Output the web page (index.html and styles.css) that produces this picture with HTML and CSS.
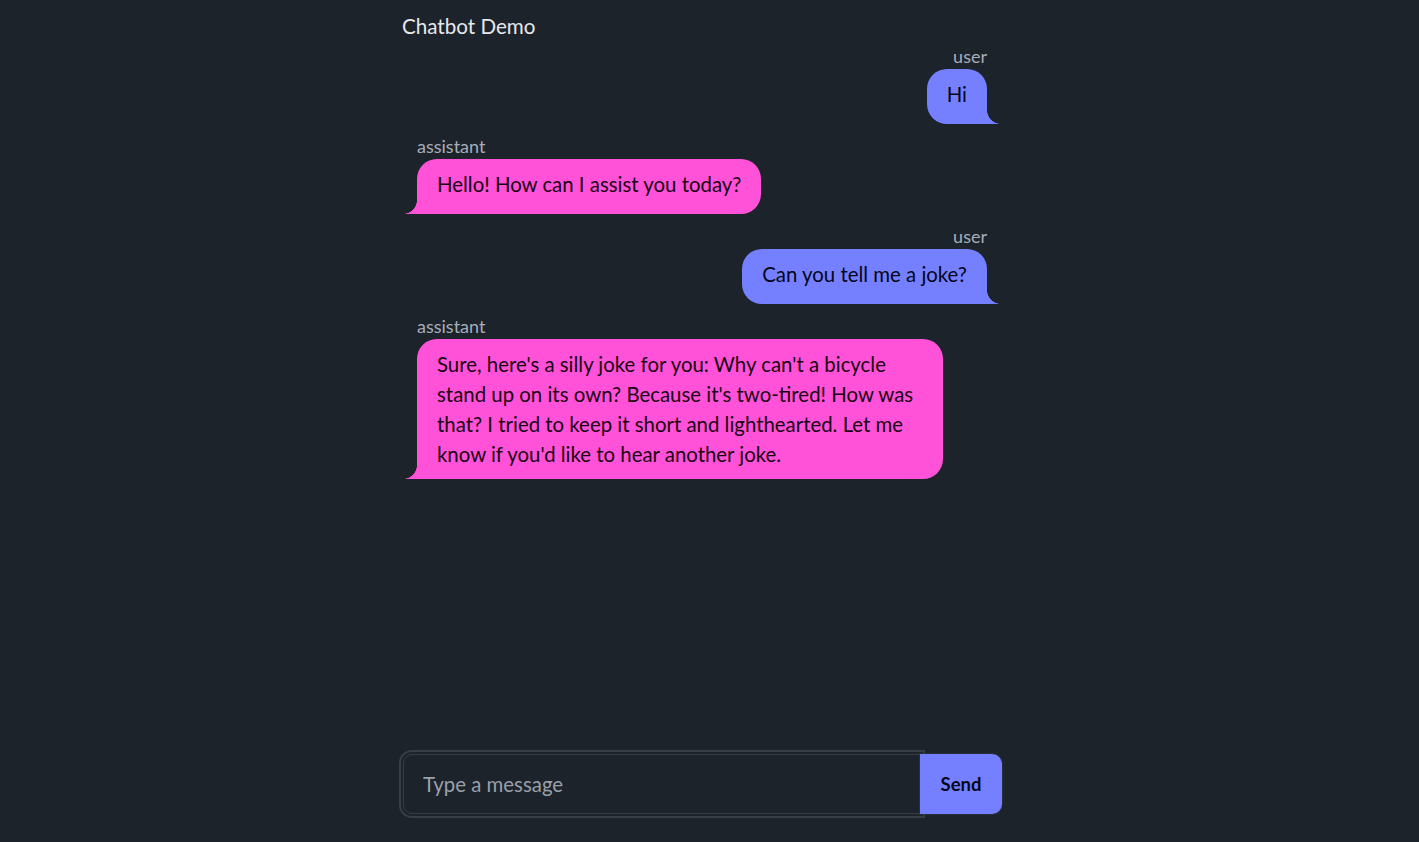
FILE: index.html
```html
<!DOCTYPE html>
<html lang="en">
<head>
<meta charset="utf-8">
<title>Chatbot Demo</title>
<link rel="stylesheet" href="styles.css">
</head>
<body>
<div class="app">
  <h1 class="title">Chatbot Demo</h1>
  <div class="chat-list">
    <div class="chat chat-end">
      <div class="chat-header">user</div>
      <div class="bubble bubble-user">Hi</div>
    </div>
    <div class="chat chat-start">
      <div class="chat-header">assistant</div>
      <div class="bubble bubble-assistant">Hello! How can I assist you today?</div>
    </div>
    <div class="chat chat-end">
      <div class="chat-header">user</div>
      <div class="bubble bubble-user">Can you tell me a joke?</div>
    </div>
    <div class="chat chat-start">
      <div class="chat-header">assistant</div>
      <div class="bubble bubble-assistant">Sure, here's a silly joke for you: Why can't a bicycle stand up on its own? Because it's two-tired! How was that? I tried to keep it short and lighthearted. Let me know if you'd like to hear another joke.</div>
    </div>
  </div>
  <form class="composer" onsubmit="return false">
    <input class="composer-input" type="text" placeholder="Type a message">
    <button class="composer-send" type="submit">Send</button>
  </form>
</div>
</body>
</html>
```
FILE: styles.css
```css
* { box-sizing: border-box; }
html, body { height: 100%; }
body {
  margin: 0;
  padding-right: 17px;
  background: #1d232a;
  color: #a6adbb;
  font-family: Lato, "Noto Sans", sans-serif;
  display: flex;
  justify-content: center;
}
.app {
  width: 604px;
  height: 100vh;
  display: flex;
  flex-direction: column;
}
.title {
  margin: 0;
  padding: 13px 0 0 3px;
  height: 39px;
  font-size: 20.6px;
  line-height: 27px;
  font-weight: 400;
  color: #e6e8ec;
}
.chat-list {
  flex: 1;
  display: flex;
  flex-direction: column;
  padding: 0 2px 0 4px;
}
.chat {
  display: flex;
  flex-direction: column;
  padding: 5px 0;
}
.chat-start { align-items: flex-start; padding-left: 14px; }
.chat-end { align-items: flex-end; padding-right: 14px; }
.chat-header {
  font-size: 18px;
  line-height: 25px;
  color: #a6adbb;
}
.bubble {
  position: relative;
  max-width: 90%;
  min-height: 55px;
  min-width: 55px;
  padding: 10px 20px;
  border-radius: 20px;
  font-size: 20.4px;
  line-height: 30px;
}
.bubble::before {
  content: "";
  position: absolute;
  bottom: 0;
  width: 14px;
  height: 14px;
}
.bubble-user {
  background: #7480ff;
  color: #050617;
  border-bottom-right-radius: 0;
}
.bubble-user::before {
  right: -14px;
  background: radial-gradient(circle at 100% 0, transparent 13.6px, #7480ff 14.2px);
}
.bubble-assistant {
  background: #ff52d9;
  color: #190211;
  border-bottom-left-radius: 0;
}
.bubble-assistant::before {
  left: -14px;
  background: radial-gradient(circle at 0 0, transparent 13.6px, #ff52d9 14.2px);
}
.composer {
  display: flex;
  margin: 0 0 28px 0;
  padding: 0 1px 0 4px;
}
.composer-input {
  flex: 1;
  height: 60px;
  min-width: 0;
  padding: 0 19px;
  border: 1px solid #373d46;
  border-radius: 9px 0 0 9px;
  background: #1d232a;
  color: #a6adbb;
  font-family: inherit;
  font-size: 20.4px;
  outline: 2px solid #383e47;
  outline-offset: 2px;
}
.composer-input::placeholder { color: #98a0ab; }
.composer-send {
  width: 82px;
  height: 60px;
  margin-left: -1px;
  border: none;
  border-radius: 0 10px 10px 0;
  background: #7480ff;
  color: #050617;
  font-family: inherit;
  font-size: 18.5px;
  font-weight: 700;
  box-shadow: 0 0 0 1px #2a3039;
  position: relative;
}
```
